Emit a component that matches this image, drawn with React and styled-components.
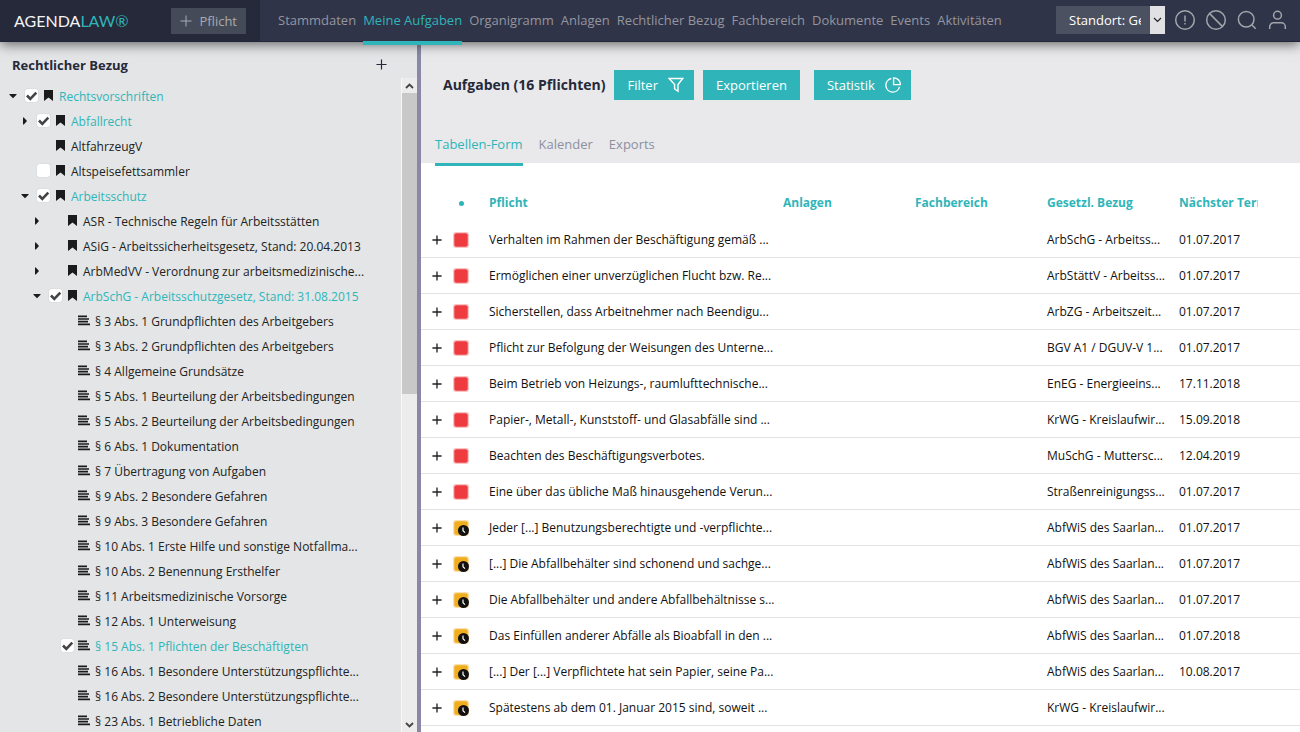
import { Fragment } from "react";
import styled, { createGlobalStyle } from "styled-components";

const teal = "#2fb5b9";

const GlobalStyle = createGlobalStyle`
  * {
    box-sizing: border-box;
  }

  body {
    margin: 0;
    overflow: hidden;
    background-color: #fff;
    color: #222;
    font-family: "Open Sans", "Noto Sans", sans-serif;
    font-size: 13px;
    line-height: 18px;
  }

  button, input, select {
    margin: 0;
    font: inherit;
    color: inherit;
  }
`;

const Page = styled.div`
  display: flex;
  flex-direction: column;
  height: 100vh;
`;

/* header */

const Header = styled.header`
  position: relative;
  z-index: 2;
  display: flex;
  flex: none;
  height: 42px;
  background-color: #2f3448;
  border-bottom: 1px solid #22263a;
  box-shadow: 0 2px 12px rgba(0, 0, 0, 0.6);
`;

const Brand = styled.div`
  display: flex;
  align-items: center;
  justify-content: space-between;
  flex: none;
  width: 260px;
  padding: 0 14px;
  background-color: #25293a;
`;

const Logo = styled.a`
  color: #f4f4f4;
  font-family: Lato, sans-serif;
  font-size: 16px;
  line-height: 24px;
  text-decoration: none;

  span {
    color: ${teal};
  }
`;

const NewButton = styled.button`
  display: flex;
  align-items: center;
  gap: 7px;
  height: 26px;
  padding: 0 9px;
  border: 0;
  background-color: #454a58;
  color: #a9abb1;
`;

const Nav = styled.nav`
  display: flex;
  flex: 1;
  gap: 7px;
  padding-left: 18px;
`;

const NavLink = styled.a`
  position: relative;
  color: ${(props) => (props.$active ? teal : "#94969f")};
  line-height: 41px;
  white-space: nowrap;
  text-decoration: none;

  &::after {
    content: "";
    position: absolute;
    top: 41px;
    left: 0;
    right: 0;
    height: 4px;
    background-color: ${(props) => (props.$active ? teal : "transparent")};
  }
`;

const Tools = styled.div`
  display: flex;
  align-items: center;
  gap: 9px;
  padding: 0 11px 2px 0;
`;

const Location = styled.div`
  display: flex;
  width: 109px;
  height: 28px;
  background-color: #4c5161;
`;

const LocationSelect = styled.select`
  flex: 1;
  min-width: 0;
  appearance: none;
  padding: 0 9px 0 13px;
  border: 0;
  background: transparent;
  color: #fff;
  text-overflow: clip;
`;

const LocationArrow = styled.span`
  display: flex;
  align-items: center;
  justify-content: center;
  width: 15px;
  background-color: #e1e1e3;
  pointer-events: none;
`;

const IconButton = styled.button`
  display: flex;
  padding: 0;
  border: 0;
  background: none;
  color: ${(props) => props.$color || "#a3a5ab"};
`;

/* sidebar */

const Body = styled.div`
  display: flex;
  flex: 1;
  min-height: 0;
`;

const Sidebar = styled.aside`
  display: flex;
  flex-direction: column;
  flex: none;
  width: 421px;
  background-color: #e3e5e6;
  border-right: 4px solid #8a88a6;
`;

const SidebarHead = styled.div`
  display: flex;
  align-items: center;
  justify-content: space-between;
  height: 36px;
  padding: 9px 30px 0 12px;
`;

const Title = styled.h2`
  margin: 0;
  color: #25293a;
  font-size: ${(props) => (props.$large ? "14px" : "13px")};
  font-weight: 700;
  white-space: nowrap;
`;

const TreeArea = styled.div`
  display: flex;
  flex: 1;
  min-height: 0;
`;

const Tree = styled.ul`
  flex: 1;
  min-width: 0;
  margin: 0;
  padding: 5px 0 0;
  overflow: hidden;
  list-style: none;
`;

const TreeRow = styled.li`
  display: flex;
  align-items: center;
  height: 25px;
  padding-left: ${(props) => 7 + props.$level * 12}px;
  color: ${(props) => (props.$active ? teal : "#222")};
  font-size: 12px;
  white-space: nowrap;

  label {
    padding: 2px 0 0 5px;
  }
`;

const Toggle = styled.button`
  display: flex;
  align-items: center;
  justify-content: center;
  flex: none;
  width: 12px;
  height: 12px;
  margin-right: 6px;
  padding: 0;
  border: 0;
  background: none;
  color: #1b1b1b;
  visibility: ${(props) => (props.$hidden ? "hidden" : "visible")};
`;

const CheckSlot = styled.span`
  display: grid;
  flex: none;
  width: 13px;
  height: 13px;
  margin-right: 4px;

  input,
  svg {
    grid-area: 1 / 1;
  }

  svg {
    pointer-events: none;
  }
`;

const Checkbox = styled.input`
  appearance: none;
  width: 13px;
  height: 13px;
  border-radius: 2px;
  background-color: #fff;
  box-shadow: 0 0 1px #aaa;
`;

const NodeIcon = styled.span`
  display: flex;
  justify-content: center;
  flex: none;
  width: 12px;
  color: #1b1b1b;
`;

const ScrollTrack = styled.div`
  display: flex;
  flex-direction: column;
  flex: none;
  width: 16px;
  background-color: #ececec;
  border-left: 1px solid #f8f8f8;
  color: #444;
`;

const ScrollArrow = styled.span`
  display: flex;
  align-items: center;
  justify-content: center;
  height: 15px;
`;

const ScrollThumb = styled.span`
  flex: 0 0 46%;
  margin-bottom: auto;
  background-color: #c8c8c8;
`;

/* content */

const Main = styled.main`
  flex: 1;
  min-width: 0;
`;

const MainHead = styled.div`
  height: 121px;
  padding: 28px 14px 0;
  background-color: #e9e9eb;
`;

const Actions = styled.div`
  display: flex;
  align-items: center;
  gap: 9px;
  padding-left: 8px;
`;

const ButtonGroup = styled.div`
  display: flex;
  gap: ${(props) => (props.$wide ? "14px" : "9px")};
`;

const Button = styled.button`
  display: flex;
  align-items: center;
  gap: 10px;
  height: 30px;
  padding: 0 ${(props) => (props.$icon ? "10px" : "13px")} 0 13px;
  border: 0;
  background-color: ${teal};
  color: #fff;
`;

const Tabs = styled.div`
  display: flex;
  gap: 16px;
  margin-top: 25px;
`;

const Tab = styled.button`
  position: relative;
  height: 38px;
  padding: 0;
  border: 0;
  background: none;
  color: ${(props) => (props.$active ? teal : "#8c90a0")};

  &::after {
    content: "";
    position: absolute;
    top: 38px;
    left: 0;
    right: 0;
    height: 3px;
    background-color: ${(props) => (props.$active ? teal : "transparent")};
  }
`;

const Table = styled.table`
  width: 100%;
  table-layout: fixed;
  border-collapse: separate;
  border-spacing: 0;
`;

const Col = styled.col`
  width: ${(props) => props.$width || "auto"};
`;

const Th = styled.th`
  height: 59px;
  padding: 31px 0 10px;
  color: ${teal};
  font-size: 12px;
  text-align: left;

  span {
    display: block;
    margin-right: ${(props) => (props.$last ? "42px" : "0")};
    overflow: hidden;
    white-space: nowrap;
  }
`;

const Td = styled.td`
  height: 36px;
  padding: 0;
  border-bottom: 1px solid #e3e3e3;
  color: #111;
  font-size: 12px;
  white-space: nowrap;
`;

const PlusCell = styled(Td)`
  padding-left: 11px;
`;

const StatusCell = styled(Td)`
  padding-left: 4px;
`;

const StatusDot = styled.span`
  width: 5px;
  height: 5px;
  margin-left: 10px;
  border-radius: 50%;
  background-color: ${teal};
`;

const Plus = ({ size, width = 1 }) => (
  <svg width={size} height={size} viewBox="0 0 12 12" fill="none" stroke="currentColor" strokeWidth={width}>
    <path d="M6 0.5v11M0.5 6h11" />
  </svg>
);

const Chevron = ({ up, width = 1.8 }) => (
  <svg width="9" height="6" viewBox="0 0 9 6" fill="none" stroke="currentColor" strokeWidth={width}>
    <path d={up ? "M1 5l3.5-3.5L8 5" : "M1 1l3.5 3.5L8 1"} />
  </svg>
);

const Caret = ({ open }) => (
  <svg width="8" height="8" viewBox="0 0 8 8" fill="currentColor">
    <path d={open ? "M0.5 2h7v0.8L4 6.2 0.5 2.8z" : "M2 0.5h0.8L6 4 2.8 7.5H2z"} />
  </svg>
);

const Bookmark = () => (
  <svg width="9" height="11" viewBox="0 0 9 11" fill="currentColor">
    <path d="M0 0h9v11L4.5 7.5 0 11z" />
  </svg>
);

const Lines = () => (
  <svg width="12" height="11" viewBox="0 0 12 11" stroke="currentColor" strokeWidth="1.7">
    <path d="M0 1.3h9M0 4h11M0 6.7h10M0 9.4h12" />
  </svg>
);

const Check = () => (
  <svg width="13" height="13" viewBox="0 0 13 13" fill="none" stroke="#444" strokeWidth="2.6">
    <path d="M2 6.5l3.3 3.3 6-6.2" />
  </svg>
);

const Funnel = () => (
  <svg width="16" height="16" viewBox="0 0 16 16" fill="none" stroke="currentColor" strokeWidth="1.4">
    <path d="M1.2 1.5h13.6L10 7.6v6.6l-3.4-2.4V7.6z" />
  </svg>
);

const Pie = () => (
  <svg width="16" height="16" viewBox="0 0 16 16" fill="none" stroke="currentColor" strokeWidth="1.4">
    <path d="M6.3 1.5a6.9 6.9 0 1 0 8.2 8.3" />
    <path d="M8.6 0.9v6.7h6.8a6.8 6.8 0 0 0-6.8-6.7z" />
  </svg>
);

const ToolIcon = ({ children }) => (
  <svg width="22" height="22" viewBox="0 0 22 22" fill="none" stroke="currentColor" strokeWidth="1.5">
    {children}
  </svg>
);

const Status = ({ late }) => (
  <svg width="16" height="16" viewBox="0 0 16 16">
    <rect width="16" height="16" rx="3" fill={late ? "#f9c4c4" : "#fbe0ae"} />
    <rect x="1.3" y="1.3" width="13.4" height="13.4" rx="2" fill={late ? "#ee3b3f" : "#f0ad1e"} />
    {!late && (
      <>
        <circle cx="10.5" cy="10.5" r="5.5" fill="#111" />
        <path d="M10 7.4v3.4l2 1.8" fill="none" stroke="#fff" strokeWidth="1.2" />
      </>
    )}
  </svg>
);

const navItems = [
  "Stammdaten",
  "Meine Aufgaben",
  "Organigramm",
  "Anlagen",
  "Rechtlicher Bezug",
  "Fachbereich",
  "Dokumente",
  "Events",
  "Aktivitäten",
];

const tree = [
  { level: 0, toggle: "open", checked: true, text: "Rechtsvorschriften" },
  { level: 1, toggle: "closed", checked: true, text: "Abfallrecht" },
  { level: 1, text: "AltfahrzeugV" },
  { level: 1, checked: false, text: "Altspeisefettsammler" },
  { level: 1, toggle: "open", checked: true, text: "Arbeitsschutz" },
  { level: 2, toggle: "closed", text: "ASR - Technische Regeln für Arbeitsstätten" },
  { level: 2, toggle: "closed", text: "ASiG - Arbeitssicherheitsgesetz, Stand: 20.04.2013" },
  { level: 2, toggle: "closed", text: "ArbMedVV - Verordnung zur arbeitsmedizinische..." },
  { level: 2, toggle: "open", checked: true, text: "ArbSchG - Arbeitsschutzgesetz, Stand: 31.08.2015" },
  { level: 3, text: "§ 3 Abs. 1 Grundpflichten des Arbeitgebers" },
  { level: 3, text: "§ 3 Abs. 2 Grundpflichten des Arbeitgebers" },
  { level: 3, text: "§ 4 Allgemeine Grundsätze" },
  { level: 3, text: "§ 5 Abs. 1 Beurteilung der Arbeitsbedingungen" },
  { level: 3, text: "§ 5 Abs. 2 Beurteilung der Arbeitsbedingungen" },
  { level: 3, text: "§ 6 Abs. 1 Dokumentation" },
  { level: 3, text: "§ 7 Übertragung von Aufgaben" },
  { level: 3, text: "§ 9 Abs. 2 Besondere Gefahren" },
  { level: 3, text: "§ 9 Abs. 3 Besondere Gefahren" },
  { level: 3, text: "§ 10 Abs. 1 Erste Hilfe und sonstige Notfallma..." },
  { level: 3, text: "§ 10 Abs. 2 Benennung Ersthelfer" },
  { level: 3, text: "§ 11 Arbeitsmedizinische Vorsorge" },
  { level: 3, text: "§ 12 Abs. 1 Unterweisung" },
  { level: 3, checked: true, text: "§ 15 Abs. 1 Pflichten der Beschäftigten" },
  { level: 3, text: "§ 16 Abs. 1 Besondere Unterstützungspflichte..." },
  { level: 3, text: "§ 16 Abs. 2 Besondere Unterstützungspflichte..." },
  { level: 3, text: "§ 23 Abs. 1 Betriebliche Daten" },
];

const tasks = [
  { late: true, duty: "Verhalten im Rahmen der Beschäftigung gemäß ...", law: "ArbSchG - Arbeitss...", date: "01.07.2017" },
  { late: true, duty: "Ermöglichen einer unverzüglichen Flucht bzw. Re...", law: "ArbStättV - Arbeitss...", date: "01.07.2017" },
  { late: true, duty: "Sicherstellen, dass Arbeitnehmer nach Beendigu...", law: "ArbZG - Arbeitszeit...", date: "01.07.2017" },
  { late: true, duty: "Pflicht zur Befolgung der Weisungen des Unterne...", law: "BGV A1 / DGUV-V 1...", date: "01.07.2017" },
  { late: true, duty: "Beim Betrieb von Heizungs-, raumlufttechnische...", law: "EnEG - Energieeins...", date: "17.11.2018" },
  { late: true, duty: "Papier-, Metall-, Kunststoff- und Glasabfälle sind ...", law: "KrWG - Kreislaufwir...", date: "15.09.2018" },
  { late: true, duty: "Beachten des Beschäftigungsverbotes.", law: "MuSchG - Muttersc...", date: "12.04.2019" },
  { late: true, duty: "Eine über das übliche Maß hinausgehende Verun...", law: "Straßenreinigungss...", date: "01.07.2017" },
  { duty: "Jeder [...] Benutzungsberechtigte und -verpflichte...", law: "AbfWiS des Saarlan...", date: "01.07.2017" },
  { duty: "[...] Die Abfallbehälter sind schonend und sachge...", law: "AbfWiS des Saarlan...", date: "01.07.2017" },
  { duty: "Die Abfallbehälter und andere Abfallbehältnisse s...", law: "AbfWiS des Saarlan...", date: "01.07.2017" },
  { duty: "Das Einfüllen anderer Abfälle als Bioabfall in den ...", law: "AbfWiS des Saarlan...", date: "01.07.2018" },
  { duty: "[...] Der [...] Verpflichtete hat sein Papier, seine Pa...", law: "AbfWiS des Saarlan...", date: "10.08.2017" },
  { duty: "Spätestens ab dem 01. Januar 2015 sind, soweit ...", law: "KrWG - Kreislaufwir...", date: "" },
];

const TopBar = () => (
  <Header>
    <Brand>
      <Logo href="#">
        AGENDA<span>LAW®</span>
      </Logo>
      <NewButton>
        <Plus size={12} />
        Pflicht
      </NewButton>
    </Brand>
    <Nav>
      {navItems.map((item) => (
        <NavLink key={item} href="#" $active={item === "Meine Aufgaben"}>
          {item}
        </NavLink>
      ))}
    </Nav>
    <Tools>
      <Location>
        <LocationSelect aria-label="Standort">
          <option>Standort: Gesamt</option>
        </LocationSelect>
        <LocationArrow>
          <Chevron width={1.2} />
        </LocationArrow>
      </Location>
      <IconButton aria-label="Hinweise">
        <ToolIcon>
          <circle cx="11" cy="11" r="9.3" />
          <path d="M11 6.5v6M11 14v1.6" />
        </ToolIcon>
      </IconButton>
      <IconButton aria-label="Gesperrt">
        <ToolIcon>
          <circle cx="11" cy="11" r="9.3" />
          <path d="M4.4 4.4l13.2 13.2" />
        </ToolIcon>
      </IconButton>
      <IconButton aria-label="Suche">
        <ToolIcon>
          <circle cx="10.2" cy="10.2" r="7.8" />
          <path d="M15.7 15.7l4 4" />
        </ToolIcon>
      </IconButton>
      <IconButton aria-label="Benutzer">
        <ToolIcon>
          <circle cx="10.5" cy="6.2" r="3.9" />
          <path d="M2.7 20v-2.2a4 4 0 0 1 4-4h7.6a4 4 0 0 1 4 4V20" />
        </ToolIcon>
      </IconButton>
    </Tools>
  </Header>
);

const TreeItem = ({ node, id }) => {
  const hasCheck = node.checked !== undefined;
  return (
    <TreeRow $level={node.level} $active={node.checked}>
      <Toggle $hidden={!node.toggle} aria-label={node.text}>
        <Caret open={node.toggle === "open"} />
      </Toggle>
      <CheckSlot>
        {hasCheck && <Checkbox type="checkbox" id={id} defaultChecked={node.checked} />}
        {node.checked && <Check />}
      </CheckSlot>
      <NodeIcon>{node.level === 3 ? <Lines /> : <Bookmark />}</NodeIcon>
      <label htmlFor={hasCheck ? id : undefined}>{node.text}</label>
    </TreeRow>
  );
};

const LawTree = () => (
  <Sidebar>
    <SidebarHead>
      <Title>Rechtlicher Bezug</Title>
      <IconButton aria-label="Hinzufügen" $color="#25293a">
        <Plus size={11} width={1.3} />
      </IconButton>
    </SidebarHead>
    <TreeArea>
      <Tree>
        {tree.map((node, i) => (
          <TreeItem key={node.text} node={node} id={`node-${i}`} />
        ))}
      </Tree>
      <ScrollTrack>
        <ScrollArrow>
          <Chevron up />
        </ScrollArrow>
        <ScrollThumb />
        <ScrollArrow>
          <Chevron />
        </ScrollArrow>
      </ScrollTrack>
    </TreeArea>
  </Sidebar>
);

const TaskTable = () => (
  <Table>
    <colgroup>
      <Col $width="28px" />
      <Col $width="40px" />
      <Col />
      <Col $width="132px" />
      <Col $width="132px" />
      <Col $width="132px" />
      <Col $width="121px" />
    </colgroup>
    <thead>
      <tr>
        <Th />
        <Th>
          <StatusDot />
        </Th>
        <Th>
          <span>Pflicht</span>
        </Th>
        <Th>
          <span>Anlagen</span>
        </Th>
        <Th>
          <span>Fachbereich</span>
        </Th>
        <Th>
          <span>Gesetzl. Bezug</span>
        </Th>
        <Th $last>
          <span>Nächster Termin</span>
        </Th>
      </tr>
    </thead>
    <tbody>
      {tasks.map((task) => (
        <tr key={task.duty}>
          <PlusCell>
            <IconButton aria-label="Aufklappen" $color="#222">
              <Plus size={10} width={1.6} />
            </IconButton>
          </PlusCell>
          <StatusCell>
            <IconButton as="span">
              <Status late={task.late} />
            </IconButton>
          </StatusCell>
          <Td>{task.duty}</Td>
          <Td />
          <Td />
          <Td>{task.law}</Td>
          <Td>{task.date}</Td>
        </tr>
      ))}
    </tbody>
  </Table>
);

export default function App() {
  return (
    <Fragment>
      <GlobalStyle />
      <Page>
        <TopBar />
        <Body>
          <LawTree />
          <Main>
            <MainHead>
              <Actions>
                <Title $large>Aufgaben (16 Pflichten)</Title>
                <ButtonGroup $wide>
                  <ButtonGroup>
                    <Button $icon>
                      Filter
                      <Funnel />
                    </Button>
                    <Button>Exportieren</Button>
                  </ButtonGroup>
                  <Button $icon>
                    Statistik
                    <Pie />
                  </Button>
                </ButtonGroup>
              </Actions>
              <Tabs>
                <Tab $active>Tabellen-Form</Tab>
                <Tab>Kalender</Tab>
                <Tab>Exports</Tab>
              </Tabs>
            </MainHead>
            <TaskTable />
          </Main>
        </Body>
      </Page>
    </Fragment>
  );
}
